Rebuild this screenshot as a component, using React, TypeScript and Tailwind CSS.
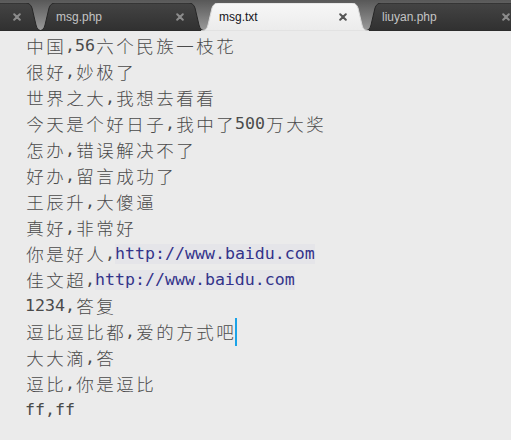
import React from "react";

const lines: string[] = [
  "中国,56六个民族一枝花",
  "很好,妙极了",
  "世界之大,我想去看看",
  "今天是个好日子,我中了500万大奖",
  "怎办,错误解决不了",
  "好办,留言成功了",
  "王辰升,大傻逼",
  "真好,非常好",
  "你是好人,http://www.baidu.com",
  "佳文超,http://www.baidu.com",
  "1234,答复",
  "逗比逗比都,爱的方式吧",
  "大大滴,答",
  "逗比,你是逗比",
  "ff,ff",
];

const isCJK = (ch: string) => /[\u3000-\u9fff\uff00-\uffef]/.test(ch);

function renderText(text: string, keyBase: string) {
  const out: React.ReactNode[] = [];
  let buf = "";
  const flush = (i: number) => {
    if (buf) {
      out.push(
        <span key={keyBase + "a" + i} className="text-[#4a4a4a]">
          {buf}
        </span>
      );
      buf = "";
    }
  };
  Array.from(text).forEach((ch, i) => {
    if (isCJK(ch)) {
      flush(i);
      out.push(
        <span
          key={keyBase + "c" + i}
          className="inline-block w-[20px] text-center text-[17.5px] font-light text-[#4a4a4a] align-top"
          style={{ fontFamily: '"Noto Sans CJK SC", sans-serif' }}
        >
          {ch}
        </span>
      );
    } else {
      buf += ch;
    }
  });
  flush(9999);
  return out;
}

function Line({ text, idx, cursor }: { text: string; idx: number; cursor?: boolean }) {
  const m = text.indexOf("http");
  const pre = m >= 0 ? text.slice(0, m) : text;
  const url = m >= 0 ? text.slice(m) : "";
  return (
    <div className="h-[26px] leading-[26px] whitespace-pre flex items-start">
      {renderText(pre, "l" + idx)}
      {url && <span className="bg-[#e5e5e9] text-[#33338a] leading-[20px] mt-[3px]">{url}</span>}
      {cursor && <span className="inline-block w-[2px] h-[28px] -mt-[1px] bg-[#1aa3e8]" />}
    </div>
  );
}

function TabShape({ active }: { active: boolean }) {
  const W = 168;
  const H = 28;
  const d = `M0,${H} C4,${H} 6,${H - 2} 7,${H - 6} L11,5 C12,2 14,0 17,0 L${W - 17},0 C${W - 14},0 ${W - 12},2 ${W - 11},5 L${W - 7},${H - 6} C${W - 6},${H - 2} ${W - 4},${H} ${W},${H} Z`;
  const gid = active ? "gA" : "gD";
  return (
    <svg className="absolute inset-0" width={W} height={H} viewBox={`0 0 ${W} ${H}`}>
      <defs>
        <linearGradient id={gid} x1="0" y1="0" x2="0" y2="1">
          {active ? (
            <>
              <stop offset="0" stopColor="#f7f7f7" />
              <stop offset="1" stopColor="#ebebeb" />
            </>
          ) : (
            <>
              <stop offset="0" stopColor="#444444" />
              <stop offset="1" stopColor="#303030" />
            </>
          )}
        </linearGradient>
      </defs>
      <path d={d} fill={`url(#${gid})`} stroke={active ? "#d8d8d8" : "#262626"} strokeWidth="1" />
    </svg>
  );
}

function Tab({ label, active, first }: { label: string; active?: boolean; first?: boolean }) {
  return (
    <div
      className={
        "relative shrink-0 w-[168px] h-[28px] mt-[3px] " +
        (first ? "ml-[-125px] " : "ml-[-5px] ") +
        (active ? "z-10" : "z-0")
      }
    >
      <TabShape active={!!active} />
      <div className="relative flex items-center h-full pl-[18px] pb-[1px]">
        <span
          className={"flex-1 text-[12px] " + (active ? "text-[#141420]" : "text-[#c4c4c4]")}
          style={{ fontFamily: '"Liberation Sans", Arial, sans-serif' }}
        >
          {label}
        </span>
        <svg width="8" height="8" viewBox="0 0 8 8" className="mr-[22px] shrink-0">
          <path
            d="M1.2 1.2 L6.8 6.8 M6.8 1.2 L1.2 6.8"
            stroke={active ? "#555555" : "#8c8c8c"}
            strokeWidth="2"
            strokeLinecap="round"
          />
        </svg>
      </div>
    </div>
  );
}

export default function App() {
  return (
    <div className="w-[511px] h-[440px] overflow-hidden bg-[#ebebeb] flex flex-col">
      <div className="h-[31px] shrink-0 flex overflow-hidden bg-gradient-to-b from-[#585858] to-[#9c9c9c]">
        <Tab label="" first />
        <Tab label="msg.php" />
        <Tab label="msg.txt" active />
        <Tab label="liuyan.php" />
      </div>
      <div
        className="flex-1 pl-[25px] pt-[2px] text-[16.6px]"
        style={{ fontFamily: '"DejaVu Sans Mono", "Liberation Mono", monospace' }}
      >
        {lines.map((t, i) => (
          <Line key={i} text={t} idx={i} cursor={i === 11} />
        ))}
      </div>
    </div>
  );
}
